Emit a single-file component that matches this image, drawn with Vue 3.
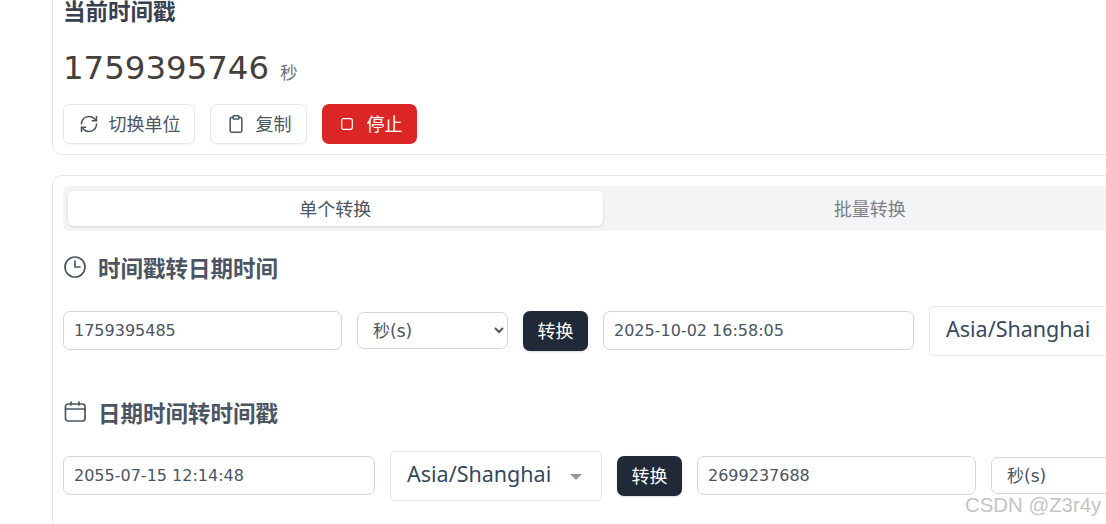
<script setup>
const rows = [
  { key: 'a', title: '时间戳转日期时间', icon: 'clock' },
  { key: 'b', title: '日期时间转时间戳', icon: 'calendar' }
]
</script>

<template>
  <div class="page">
    <section class="card top">
      <h2 class="heading">当前时间戳</h2>
      <div class="now"><span class="digits">1759395746</span><span class="unit">秒</span></div>
      <div class="actions">
        <button class="btn outline w132">
          <svg class="ico" viewBox="0 0 24 24"><path d="M3 12a9 9 0 0 1 15-6.7L21 8"/><path d="M21 3v5h-5"/><path d="M21 12a9 9 0 0 1-15 6.7L3 16"/><path d="M8 16H3v5"/></svg>
          <span class="lift">切换单位</span>
        </button>
        <button class="btn outline w97">
          <svg class="ico" viewBox="0 0 24 24"><path d="M8.5 4H7a2 2 0 0 0-2 2v14a2 2 0 0 0 2 2h10a2 2 0 0 0 2-2V6a2 2 0 0 0-2-2h-1.5"/><rect x="8.5" y="2" width="7" height="4" rx="1"/></svg>
          <span class="lift">复制</span>
        </button>
        <button class="btn danger w95">
          <svg class="ico small" viewBox="0 0 24 24"><rect x="4" y="4" width="16" height="16" rx="3"/></svg>
          <span class="lift">停止</span>
        </button>
      </div>
    </section>

    <section class="card main">
      <div class="tabs">
        <div class="tab active">单个转换</div>
        <div class="tab">批量转换</div>
      </div>

      <h3 class="sub first">
        <svg class="subico" viewBox="0 0 24 24"><circle cx="12" cy="12" r="10"/><path d="M12 6v6h5"/></svg>
        <span>{{ rows[0].title }}</span>
      </h3>
      <div class="row">
        <input class="field w279" value="1759395485" />
        <select class="sel w151"><option>秒(s)</option></select>
        <button class="btn dark"><span class="lift">转换</span></button>
        <input class="field w311" value="2025-10-02 16:58:05" />
        <div class="multi w212"><span class="lift big">Asia/Shanghai</span><i class="caret"></i></div>
      </div>

      <h3 class="sub second">
        <svg class="subico" viewBox="0 0 24 24"><path d="M8 2v3M16 2v3"/><rect x="2.5" y="4" width="19.5" height="17" rx="2.5"/><path d="M2.5 9H22"/></svg>
        <span>{{ rows[1].title }}</span>
      </h3>
      <div class="row">
        <input class="field w312" value="2055-07-15 12:14:48" />
        <div class="multi w212"><span class="lift big">Asia/Shanghai</span><i class="caret"></i></div>
        <button class="btn dark"><span class="lift">转换</span></button>
        <input class="field w279" value="2699237688" />
        <select class="sel w151"><option>秒(s)</option></select>
      </div>
    </section>

    <div class="mark">CSDN @Z3r4y</div>
  </div>
</template>

<style>
html, body { margin: 0; overflow: hidden; background: #fff; }
</style>

<style scoped>
.page {
  position: relative;
  width: 1106px;
  height: 524px;
  overflow: hidden;
  background: #fff;
  font-family: "DejaVu Sans", "Noto Sans CJK SC", sans-serif;
  color: #4b5563;
}
.card {
  box-sizing: border-box;
  width: 1101px;
  margin-left: 52px;
  padding: 0 10px;
  background: #fff;
  border: 1px solid #e5e7eb;
  border-radius: 10px;
}
.top { height: 170px; margin-top: -15px; padding-top: 9px; }
.main { height: 354px; margin-top: 20px; padding-top: 10px; }
.heading {
  margin: 0;
  font: 700 22.5px/30px "Noto Sans CJK SC", sans-serif;
  color: #374151;
}
.now { display: flex; align-items: baseline; margin-top: 21px; height: 44px; }
.digits { font-size: 32.4px; line-height: 44px; color: #44403c; letter-spacing: 0; }
.unit { margin-left: 11px; font: 17.6px "Noto Sans CJK SC", sans-serif; color: #6b7280; }
.actions { display: flex; gap: 15px; margin-top: 14px; }
.btn {
  box-sizing: border-box;
  display: flex;
  align-items: center;
  justify-content: center;
  height: 40px;
  padding: 0;
  border-radius: 7px;
  font: 18px "Noto Sans CJK SC", sans-serif;
}
.lift { padding-bottom: 3px; }
.lift.big { padding-bottom: 5px; }
.outline { border: 1px solid #e5e7eb; background: #fff; color: #4b5563; box-shadow: 0 1px 2px rgba(0,0,0,.04); }
.danger { border: 0; background: #dc2626; color: #fff; padding-left: 2px; }
.dark { width: 65px; border: 0; background: #1f2937; color: #fff; box-shadow: 0 1px 2px rgba(0,0,0,.15); flex: none; }
.w132 { width: 132px; padding-left: 1px; }
.w97 { width: 97px; }
.w95 { width: 95px; }
.ico { width: 20px; height: 20px; margin-right: 10px; fill: none; stroke: currentColor; stroke-width: 1.8; stroke-linecap: round; stroke-linejoin: round; }
.ico.small { width: 16px; height: 16px; margin-right: 12px; }
.tabs {
  display: flex;
  padding: 5px;
  background: #f3f4f6;
  border-radius: 6px;
}
.tab {
  flex: 1;
  height: 35px;
  text-align: center;
  font: 18px/35px "Noto Sans CJK SC", sans-serif;
  color: #7b8088;
  border-radius: 6px;
}
.tab.active { background: #fff; color: #4b5563; box-shadow: 0 1px 3px rgba(0,0,0,.12); }
.sub {
  display: flex;
  align-items: center;
  margin: 0;
  height: 30px;
  font: 700 22.5px/30px "Noto Sans CJK SC", sans-serif;
  color: #4b5563;
}
.first { margin-top: 21px; }
.second { margin-top: 41px; }
.subico { flex: none; width: 24px; height: 24px; margin-right: 11px; fill: none; stroke: currentColor; stroke-width: 1.7; stroke-linecap: round; stroke-linejoin: round; }
.row { display: flex; align-items: center; gap: 15px; height: 50px; margin-top: 24px; }
.field {
  box-sizing: border-box;
  flex: none;
  height: 39px;
  margin-bottom: 2px;
  padding: 0 10px;
  border: 1px solid #d1d5db;
  border-radius: 7px;
  background: #fff;
  outline: none;
  font: 16px "DejaVu Sans", sans-serif;
  color: #4b5563;
}
.sel {
  box-sizing: border-box;
  flex: none;
  height: 37px;
  margin-bottom: 1px;
  padding: 0 0 0 11px;
  border: 1px solid #d1d5db;
  border-radius: 7px;
  background: #fff;
  font: 17px "DejaVu Sans", "Noto Sans CJK SC", sans-serif;
  color: #4b5563;
}
.multi {
  box-sizing: border-box;
  flex: none;
  display: flex;
  align-items: center;
  height: 50px;
  padding-left: 16px;
  border: 1px solid #e8e8e8;
  border-radius: 5px;
  background: #fff;
  font: 21.5px "Noto Sans", sans-serif;
  color: #35495e;
}
.caret {
  margin-left: 19px;
  width: 0;
  height: 0;
  border-left: 6px solid transparent;
  border-right: 6px solid transparent;
  border-top: 6px solid #999;
  margin-top: 1px;
}
.w279 { width: 279px; }
.w311 { width: 311px; }
.w312 { width: 312px; }
.w151 { width: 151px; }
.w212 { width: 212px; }
.mark {
  position: absolute;
  left: 965px;
  top: 493px;
  font: 20.4px/24px "Liberation Sans", sans-serif;
  color: #c4c4c4;
}
</style>
